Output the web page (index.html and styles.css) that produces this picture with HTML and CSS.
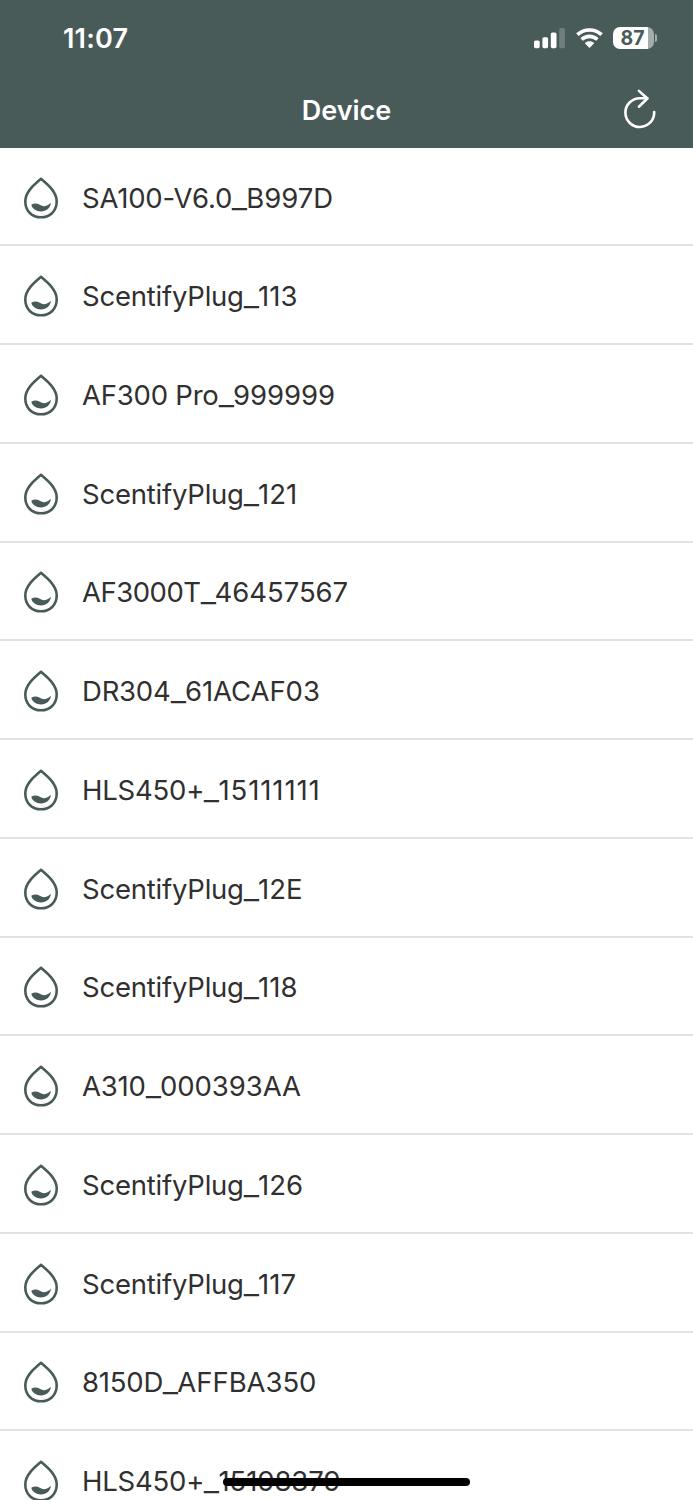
FILE: index.html
```html
<!DOCTYPE html>
<html lang="en">
<head>
    <meta charset="UTF-8">
    <meta name="viewport" content="width=device-width, initial-scale=1.0">
    <title>Device</title>
    <link rel="stylesheet" href="styles.css">
</head>
<body>
    <svg class="sprite" width="0" height="0">
        <symbol id="drop" viewBox="0 0 36 44">
            <path d="M18 2.8C11.5 8.3 2.3 15.8 2.3 25.5C2.3 35 9 41.3 18 41.3S33.7 35 33.7 25.5C33.7 15.8 24.5 8.3 18 2.8Z" fill="none" stroke="#485b59" stroke-width="2.6" stroke-linejoin="round"/>
            <path d="M8.3 28.8C11 26.9 14 27 16.8 28.8C20.5 31.3 24 30.4 28 26.8C27.4 31.8 23.5 35.4 18 35.4C13 35.4 9.2 32.8 8.3 28.8Z" fill="#485b59"/>
        </symbol>
    </svg>

    <div class="screen">
        <header class="header">
            <div class="status-bar">
                <span class="time">11:07</span>
                <div class="status-icons">
                    <svg class="signal" width="31" height="21" viewBox="0 0 31 21" fill="#fff">
                        <rect x="0" y="12.5" width="5.7" height="7.7" rx="1.6"/>
                        <rect x="8.4" y="9.2" width="5.7" height="11" rx="1.6"/>
                        <rect x="16.8" y="4.5" width="5.7" height="15.7" rx="1.6"/>
                        <rect x="25.2" y="0" width="5.7" height="20.2" rx="1.6" opacity=".22"/>
                    </svg>
                    <svg class="wifi" width="27" height="21" viewBox="0 0 27 21">
                        <path d="M1.4 6.7C8.2 .4 18.8 .4 25.6 6.7" fill="none" stroke="#fff" stroke-width="3.7"/>
                        <path d="M5.6 11.5C10.2 7.3 16.8 7.3 21.4 11.5" fill="none" stroke="#fff" stroke-width="3.6"/>
                        <path d="M8.8 15.2C11.6 12.6 15.4 12.6 18.2 15.2L13.5 20Z" fill="#fff"/>
                    </svg>
                    <div class="battery">
                        <div class="battery-body"><span class="battery-level">87</span></div>
                        <span class="battery-cap"></span>
                    </div>
                </div>
            </div>
            <div class="nav-bar">
                <h1 class="title">Device</h1>
                <svg class="refresh" width="36" height="45" viewBox="0 0 36 45" fill="none" stroke="#fff" stroke-width="2.6" stroke-linecap="round" stroke-linejoin="round">
                    <path d="M32.2 23.1A14.4 14.4 0 1 1 17.8 9.2H25.2"/>
                    <path d="M16.9 1.9L25.4 9.5L16.9 17.7"/>
                </svg>
            </div>
        </header>

        <ul class="device-list">
            <li class="device"><svg class="drop"><use href="#drop"/></svg><span class="name">SA100-V6.0<i>_</i><b>B997D</b></span></li>
            <li class="device"><svg class="drop"><use href="#drop"/></svg><span class="name">ScentifyPlug<i>_</i><b>113</b></span></li>
            <li class="device"><svg class="drop"><use href="#drop"/></svg><span class="name">AF300 Pro<i>_</i><b>999999</b></span></li>
            <li class="device"><svg class="drop"><use href="#drop"/></svg><span class="name">ScentifyPlug<i>_</i><b>121</b></span></li>
            <li class="device"><svg class="drop"><use href="#drop"/></svg><span class="name tight">AF3000T<i>_</i><b>46457567</b></span></li>
            <li class="device"><svg class="drop"><use href="#drop"/></svg><span class="name">DR304<i>_</i><b>61ACAF03</b></span></li>
            <li class="device"><svg class="drop"><use href="#drop"/></svg><span class="name">HLS450+<i>_</i><b class="loose">15111111</b></span></li>
            <li class="device"><svg class="drop"><use href="#drop"/></svg><span class="name">ScentifyPlug<i>_</i><b>12E</b></span></li>
            <li class="device"><svg class="drop"><use href="#drop"/></svg><span class="name">ScentifyPlug<i>_</i><b>118</b></span></li>
            <li class="device"><svg class="drop"><use href="#drop"/></svg><span class="name">A310<i>_</i><b>000393AA</b></span></li>
            <li class="device"><svg class="drop"><use href="#drop"/></svg><span class="name">ScentifyPlug<i>_</i><b>126</b></span></li>
            <li class="device"><svg class="drop"><use href="#drop"/></svg><span class="name">ScentifyPlug<i>_</i><b>117</b></span></li>
            <li class="device"><svg class="drop"><use href="#drop"/></svg><span class="name">8150D<i>_</i><b>AFFBA350</b></span></li>
            <li class="device"><svg class="drop"><use href="#drop"/></svg><span class="name">HLS450+<i>_</i><b>15198379</b></span></li>
        </ul>

        <div class="home-indicator"></div>
    </div>
</body>
</html>
```
FILE: styles.css
```css
* {
    box-sizing: border-box;
}

body {
    margin: 0;
    font-family: Inter, "Liberation Sans", sans-serif;
    background-color: #fff;
    color: #303030;
}

.sprite {
    display: none;
}

.screen {
    position: relative;
    height: 1500px;
    overflow: hidden;
}

/* header */
.header {
    height: 147.75px;
    background-color: #485b59;
    color: #fff;
}

.status-bar {
    display: flex;
    justify-content: space-between;
    align-items: center;
    height: 76px;
    padding: 0 36px 0 63px;
}

.time {
    font-size: 27px;
    font-weight: 600;
    letter-spacing: 0.2px;
}

.status-icons {
    display: flex;
    align-items: center;
}

.wifi {
    margin: 0 10.5px 0 11px;
}

.battery {
    display: flex;
    align-items: center;
    gap: 1px;
}

.battery-body {
    display: flex;
    align-items: center;
    width: 41px;
    height: 22px;
    padding-left: 7.5px;
    border-radius: 7px;
    background: linear-gradient(to right, #fff 35px, #a4adac 35px);
}

.battery-level {
    color: #485b59;
    font-size: 19.5px;
    font-weight: 700;
    line-height: 22px;
}

.battery-cap {
    width: 2px;
    height: 8px;
    border-radius: 0 4px 4px 0;
    background-color: #a4adac;
}

.nav-bar {
    display: grid;
    grid-template-columns: 1fr auto 1fr;
    align-items: center;
    height: 71px;
    padding: 0 35px;
}

.title {
    grid-column: 2;
    margin: 0 0 2px;
    font-size: 27px;
    font-weight: 600;
}

.refresh {
    justify-self: end;
}

/* devices */
.device-list {
    margin: 0;
    padding: 0;
    list-style: none;
}

.device {
    display: flex;
    align-items: center;
    height: 98.75px;
    padding: 3px 0 0 23px;
    border-bottom: 2px solid #e2e2e2;
}

.device:first-child {
    height: 98.5px;
}

.drop {
    flex: none;
    width: 36px;
    height: 44px;
}

.name {
    margin-left: 23px;
    font-size: 27.5px;
    letter-spacing: -0.22px;
    white-space: nowrap;
}

.name.tight {
    letter-spacing: -0.5px;
}

/* wide separator between model and id */
.name i {
    display: inline-block;
    margin: 0 1px 0 1px;
    font-style: normal;
    transform: scaleX(1.22);
}

.name b {
    font-weight: 400;
    letter-spacing: -0.05px;
}

.name .loose {
    letter-spacing: 0.9px;
}

.home-indicator {
    position: absolute;
    left: 223px;
    top: 1478px;
    width: 247px;
    height: 8px;
    border-radius: 4px;
    background-color: #000;
}
```
